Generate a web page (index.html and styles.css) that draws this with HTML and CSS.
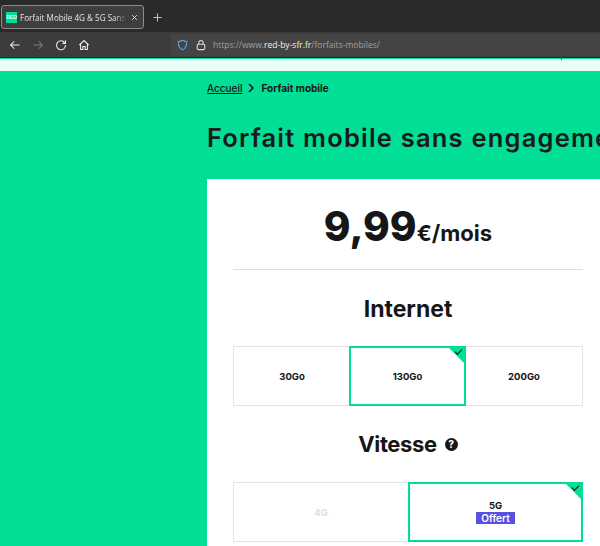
FILE: index.html
```html
<!DOCTYPE html>
<html lang="fr">
<head>
<meta charset="utf-8">
<title>Forfait Mobile 4G &amp; 5G Sans Engagement</title>
<link rel="stylesheet" href="styles.css">
</head>
<body>
<div class="tabbar">
  <div class="tab">
    <span class="favicon">RED</span>
    <span class="tab-title">Forfait Mobile 4G &amp; 5G Sans Engagement</span>
    <svg class="tab-close" viewBox="0 0 10 10"><path d="M1.5 1.5l7 7M8.5 1.5l-7 7"/></svg>
  </div>
  <svg class="new-tab" viewBox="0 0 10 10"><path d="M5 .5v9M.5 5h9"/></svg>
</div>
<div class="toolbar">
  <svg class="nav-icon" viewBox="0 0 16 16"><path d="M14 8H2.500M7 3 2.200 8 7 13"/></svg>
  <svg class="nav-icon dim" viewBox="0 0 16 16"><path d="M2 8h11.500M9 3l4.800 5L9 13"/></svg>
  <svg class="nav-icon" viewBox="0 0 16 16"><path d="M13.300 5.500A6 6 0 1 0 14 8M14 1.800v4h-4"/></svg>
  <svg class="nav-icon" viewBox="0 0 16 16"><path d="M1.800 8 8 2l6.200 6M3.500 7v7h3V10h3v4h3V7"/></svg>
  <div class="urlbar">
    <svg class="shield" viewBox="0 0 14 14"><path d="M7 1c1.500 1 3.500 1.500 5.500 1.500C12.500 8 10.500 11.500 7 13 3.500 11.500 1.500 8 1.500 2.500 3.500 2.500 5.500 2 7 1z"/></svg>
    <svg class="lock" viewBox="0 0 12 14"><path d="M3.500 6V4a2.500 2.500 0 0 1 5 0v2"/><rect x="1.500" y="6" width="9" height="6.500" rx="1.500"/></svg>
    <span class="url">https://www.<b>red-by-sfr.fr</b>/forfaits-mobiles/</span>
  </div>
</div>
<div class="sitebar"></div>
<main class="page">
  <nav class="crumbs">
    <a class="crumb-link" href="#">Accueil</a>
    <svg class="crumb-sep" viewBox="0 0 8 10"><path d="M2 1l4 4-4 4"/></svg>
    <strong>Forfait mobile</strong>
  </nav>
  <h1 class="title">Forfait mobile sans engagement</h1>
  <section class="card">
    <div class="price"><span class="price-num">9,99</span><span class="price-unit">€/mois</span></div>
    <hr class="rule">
    <h2 class="heading heading-internet">Internet</h2>
    <div class="options">
      <div class="option">30Go</div>
      <div class="option selected selected-third">130Go</div>
      <div class="option">200Go</div>
    </div>
    <h2 class="heading heading-speed"><span class="speed-label">Vitesse</span> <span class="help">?</span></h2>
    <div class="options options-speed">
      <div class="option disabled">4G</div>
      <div class="option selected selected-half">5G<span class="badge">Offert</span></div>
    </div>
  </section>
</main>
</body>
</html>
```
FILE: styles.css
```css
* { box-sizing: border-box; }
html, body { margin: 0; height: 546px; overflow: hidden; }
body { width: 600px; background: #00df95; font-family: Inter, "Liberation Sans", sans-serif; color: #161616; }

.tabbar { height: 32px; background: #2b2a2a; display: flex; align-items: center; padding: 5px 0 3px 1px; }
.tab { width: 143px; height: 24px; border: 1px solid #8c8c8c; border-radius: 3px; background: #3e3e3e; display: flex; align-items: center; padding: 0 5px 0 4px; color: #e6e6e6; font: 8.100px "Open Sans", sans-serif; }
.favicon { flex: none; width: 11px; height: 11px; background: #00df95; color: #fff; font: 700 5px/11px "Liberation Sans", sans-serif; text-align: center; }
.tab-title { flex: 1; min-width: 0; margin-left: 3px; white-space: nowrap; overflow: hidden; -webkit-mask-image: linear-gradient(90deg, #000 88%, transparent); mask-image: linear-gradient(90deg, #000 88%, transparent); }
.tab-close { flex: none; width: 7px; height: 7px; margin-left: 4px; fill: none; stroke: #e6e6e6; stroke-width: 1.200; }
.new-tab { width: 9px; height: 9px; margin-left: 9px; fill: none; stroke: #d0d0d0; stroke-width: 1; }

.toolbar { height: 26px; background: #3c3c3c; display: flex; align-items: center; padding-left: 9px; border-bottom: 1px solid #2a2a2a; position: relative; }
.toolbar::after { content: ""; position: absolute; left: 561px; top: 25px; width: 1px; height: 3px; background: #555; }
.nav-icon { flex: none; width: 12px; height: 12px; margin-right: 11px; fill: none; stroke: #f0f0f0; stroke-width: 1.400; }
.nav-icon.dim { stroke: #7c7c7c; }
.urlbar { flex: 1; height: 22px; margin-left: 70px; padding-left: 6px; background: #444; border-radius: 3px 0 0 3px; display: flex; align-items: center; gap: 8px; }
.shield { width: 11px; height: 12px; fill: none; stroke: #5aa7e0; stroke-width: 1.300; }
.lock { width: 10px; height: 12px; fill: none; stroke: #ddd; stroke-width: 1.300; }
.url { color: #a0a0a0; font: 8.500px "Open Sans", sans-serif; white-space: nowrap; margin-left: -1px; }
.url b { color: #f0f0f0; font-weight: 400; }

.sitebar { height: 12px; margin-top: 1px; background: #e8fdf5; }
.page { padding: 11px 0 0 207px; width: 800px; }
.crumbs { display: flex; align-items: center; height: 12px; font-size: 10px; }
.crumb-link { color: #161616; text-decoration: underline; font-weight: 500; }
.crumb-sep { width: 8px; height: 10px; margin: 0 6px 0 5px; fill: none; stroke: #161616; stroke-width: 1.500; }
.crumbs strong { font-weight: 700; }
.title { margin: 28px 0 0; font-size: 25.500px; line-height: 32px; font-weight: 600; letter-spacing: 1.200px; white-space: nowrap; color: #1a1a1e; }

.card { margin-top: 25px; width: 400px; height: 400px; background: #fff; padding: 0 17px 0 26px; }
.price { height: 90px; display: flex; justify-content: center; align-items: baseline; width: 350px; line-height: 96px; }
.price-num { font-size: 40.500px; font-weight: 800; }
.price-unit { font-size: 22px; font-weight: 700; }
.rule { margin: 0; width: 350px; border: 0; border-top: 1px solid #ddd; }
.heading { margin: 0; width: 350px; text-align: center; font-size: 23px; font-weight: 700; line-height: 26px; }
.heading-internet { margin-top: 26px; }
.heading-speed { margin-top: 25px; display: flex; justify-content: center; align-items: center; gap: 8px; }
.speed-label { font-size: 22px; letter-spacing: -.4px; }
.help { width: 13px; height: 13px; border-radius: 50%; background: #161616; color: #fff; font-size: 10px; line-height: 13px; font-weight: 800; text-align: center; }
.options { display: flex; width: 350px; height: 60px; margin-top: 24px; border: 1px solid #e3e3e3; }
.options-speed { margin-top: 25px; }
.option { flex: 1 1 0; display: flex; flex-direction: column; align-items: center; justify-content: center; font-size: 9.500px; font-weight: 700; position: relative; }
.option.selected { margin-top: -1px; margin-bottom: -1px; border: 2px solid #00df95; }
.selected-third { flex: 0 0 117px; margin-left: -1px; }
.selected-half { flex: 0 0 175px; margin-right: -1px; }
.option.selected::before { content: ""; position: absolute; top: 0; right: 0; border-style: solid; border-width: 0 15px 15px 0; border-color: transparent #00df95 transparent transparent; }
.option.selected::after { content: ""; position: absolute; top: 1px; right: 2px; width: 6px; height: 3px; border: solid #161616; border-width: 0 0 1.300px 1.300px; transform: rotate(-45deg); }
.option.disabled { color: #dedede; }
.badge { background: #5b4fe0; color: #fff; font-size: 10px; font-weight: 600; line-height: 12px; padding: 0 5px; margin-top: 1px; }
```
